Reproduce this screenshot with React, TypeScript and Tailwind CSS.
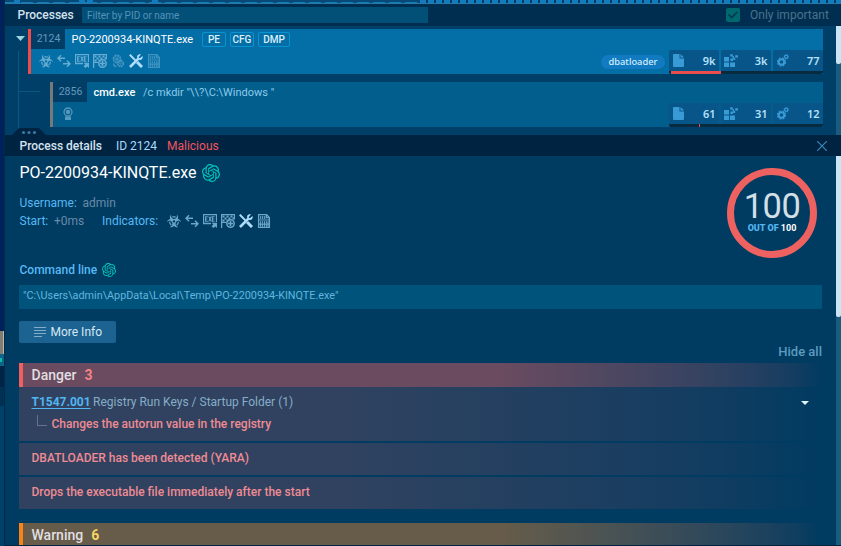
import React from "react";
import { FaBiohazard } from "react-icons/fa";
import { SiOpenai } from "react-icons/si";

type IconProps = { className?: string };

const Arrows = ({ className = "" }: IconProps) => (
  <svg viewBox="0 0 14 14" className={className} fill="none" stroke="currentColor" strokeWidth="1.5">
    <path d="M4 1.2 1 4.2l3 3M1 4.2h7M10 6.8l3 3-3 3M13 9.8H6" />
  </svg>
);

const ExeDrop = ({ className = "" }: IconProps) => (
  <svg viewBox="0 0 14 14" className={className} fill="none" stroke="currentColor">
    <path d="M8 9.5H.5v-9h13v7.5" strokeWidth="1.3" />
    <path d="M4.8 2.8H2.6v4.4h2.2M2.6 5h1.8M5.7 2.5l2.6 5M8.3 2.5l-2.6 5M11.6 2.8H9.4v4.4h2.2M9.4 5h1.8" strokeWidth="1.1" />
    <path d="M8.5 8.8H14v5.2l-1.6-1.4-2 1.4-1.9-1.7 1.8-1.9z" fill="currentColor" stroke="none" />
  </svg>
);

const FlagPlus = ({ className = "" }: IconProps) => (
  <svg viewBox="0 0 14 14" className={className} fill="none" stroke="currentColor">
    <path d="M.6 14V.6h12.8v4.6M.6 8.4H5" strokeWidth="1.3" />
    <path d="M1.5 2.5h12M3.5 4.5h10M1.5 6.5h6" strokeDasharray="2 2" strokeWidth="2" />
    <circle cx="9.5" cy="9.5" r="3.7" strokeWidth="1.5" />
    <path d="M9.5 7v5M7 9.5h5" strokeWidth="1.6" />
  </svg>
);

const CogPair = ({ className = "" }: IconProps) => (
  <svg viewBox="0 0 14 14" className={className} fill="none" stroke="currentColor">
    <circle cx="6" cy="5" r="3.5" strokeWidth="1.8" strokeDasharray="2.2 .5" />
    <circle cx="6" cy="5" r="1.2" strokeWidth="1.2" />
    <circle cx="9.5" cy="9.6" r="2.8" strokeWidth="1.7" strokeDasharray="1.8 .4" />
    <circle cx="9.5" cy="9.6" r=".8" />
    <path d="M2.5 9.5c0 2 1 3 3 3.2" strokeWidth="1.3" />
  </svg>
);

const Tools = ({ className = "" }: IconProps) => (
  <svg viewBox="0 0 14 14" className={className} fill="none" stroke="currentColor">
    <path d="m.8.8 5.6 5.6" strokeWidth="2" />
    <path d="m8 8 5 5" strokeWidth="3" />
    <path d="m1 13 8.4-8.4" strokeWidth="2.6" />
    <path d="M12 .6 9.9 2.7v1.4h1.4L13.4 2C14.4 4.2 12.7 6.3 10.5 5.9L8.1 3.5C7.7 1.3 9.8-.4 12 .6Z" fill="currentColor" stroke="none" />
  </svg>
);

const BinaryFile = ({ className = "" }: IconProps) => (
  <svg viewBox="0 0 14 14" className={className} fill="none" stroke="currentColor">
    <path d="M1.6.6h8l2.8 2.9v9.9H1.6zM9.4.6v3.1h3" strokeWidth="1.3" />
    <path d="M3.7 2v3M5.7 2v3M7.7 2v3M1.5 6h11M3.6 7.2v5.6M5.5 7.2v2M7.5 7.2v5.6M9.4 7.2v2M11 7.2v5.6M5.5 10.8v2M9.4 10.8v2M1.5 10.1h11" strokeWidth="1.1" />
  </svg>
);

const Ribbon = ({ className = "" }: IconProps) => (
  <svg viewBox="0 0 12 14" className={className} fill="none" stroke="currentColor">
    <circle cx="6" cy="5" r="4" strokeWidth="1.3" />
    <circle cx="6" cy="5" r="2.2" fill="currentColor" stroke="none" />
    <path d="M3 9.8 4.2 9 6 9.7 7.8 9l1.2.8V13H3z" fill="currentColor" stroke="none" />
  </svg>
);

const FileIcon = () => (
  <svg viewBox="0 0 11 13" className="h-[13px] w-[11px]" fill="currentColor">
    <path d="M1 0h5.5v4.5H11V12a1 1 0 0 1-1 1H1a1 1 0 0 1-1-1V1a1 1 0 0 1 1-1ZM7.5 0 11 3.5H7.5z" />
  </svg>
);

const ModulesIcon = () => (
  <svg viewBox="0 0 14 14" className="-ml-px size-3.5" fill="currentColor">
    <path d="M0 3h5v4.4H0zM0 8.6h5V13H0zM6 8.6h5V13H6zM6.2.2h2.6v2.3H6.2zM11.2 1.2H14v2.4h-2.8zM6.4 4.6H9V7H6.4zM9.2 3.8h2V6h-2zM8.4 2H10v1.8H8.4z" />
  </svg>
);

const GearsIcon = () => (
  <svg viewBox="0 0 12 13" className="h-[13px] w-3" fill="none" stroke="currentColor">
    <circle cx="4.5" cy="8" r="2.8" strokeWidth="2" />
    <circle cx="4.5" cy="8" r="4.1" strokeWidth="1.1" strokeDasharray="1.8 1.42" />
    <circle cx="9.2" cy="2.7" r="1.6" strokeWidth="1.3" />
    <circle cx="9.2" cy="2.7" r="2.4" strokeWidth=".6" strokeDasharray=".9 .9" />
  </svg>
);

function Indicators({ all = false }: { all?: boolean }) {
  return (
    <div className={`flex items-center gap-1 ${all ? "text-[#66acd1]" : "text-[#6ba6c7]"}`}>
      <FaBiohazard className="size-3.5" stroke="none" />
      <Arrows className="size-3.5" />
      <ExeDrop className="size-3.5" />
      <FlagPlus className="size-3.5" />
      {all && <CogPair className="size-3.5 opacity-65" />}
      <Tools className="size-3.5 text-[#b0ddfa]" />
      <BinaryFile className={all ? "size-3.5 opacity-60" : "size-3.5"} />
    </div>
  );
}

function Stats({ values, children }: { values: string[]; children: React.ReactNode }) {
  const icons = [<FileIcon />, <ModulesIcon />, <GearsIcon />];
  return (
    <div className="w-[154px]">
      <div className="flex gap-0.5">
        {values.map((value, i) => (
          <div key={i} className="flex h-[21px] w-[50px] items-center justify-between rounded-t-xs bg-[#08558a] pr-[3.5px] pl-1 text-[#389bd5]">
            {icons[i]}
            <span className="font-['Noto_Sans',sans-serif] text-[11px] font-semibold text-[#b5e1fa]">{value}</span>
          </div>
        ))}
      </div>
      <div className="flex h-[3px] rounded-b-xs bg-[#082b40]">{children}</div>
    </div>
  );
}

const Tag = ({ children, w }: { children: string; w: string }) => (
  <span className={`flex h-[15px] items-center justify-center rounded-xs border border-[#0b93cf] pt-px text-[10px] font-medium leading-none text-[#dcf0fc] ${w}`}>{children}</span>
);

function FindingHeader({ title, count, kind }: { title: string; count: number; kind: "danger" | "warning" }) {
  const danger = kind === "danger";
  return (
    <div className={`flex h-6 shrink-0 items-center border-l-4 bg-linear-to-r from-60% to-[#003b61] pl-[8.5px] text-sm font-medium text-[#e0dfe1] ${danger ? "border-[#f35f5c] from-[#6a4b60]" : "border-[#fb8316] from-[#665c49]"}`}>
      <span>{title}</span>
      <span className={`ml-2 font-bold ${danger ? "text-[#f48485]" : "text-[#f6d365]"}`}>{count}</span>
    </div>
  );
}

const Finding = ({ children }: { children: string }) => (
  <div className="mt-0.5 flex h-8 shrink-0 items-center bg-linear-to-r from-[#304260] from-40% to-[#003b61] pb-[2px] pl-[12.5px] text-[12px] font-medium text-[#ef8b93]">{children}</div>
);

export default function App() {
  return (
    <div className="flex h-[546px] w-[841px] overflow-hidden bg-[#003b61] font-[Roboto,sans-serif] text-[12px] leading-none">
      <aside className="flex w-[5px] shrink-0 flex-col border-r border-[#002a47] bg-[#00225a]">
        <div className="h-[331px]" />
        <div className="h-[23px] border-r border-[#c1b79a] bg-[#7e7d78]" />
        <div className="flex h-3 items-center bg-[#0d6589]"><i className="h-1 w-0.5 bg-[#08baaa]" /></div>
        <div className="h-[21px] bg-[#002346]" />
        <div className="h-[19px] bg-[#003054]" />
        <div className="grow bg-[#004069]" />
      </aside>

      <main className="flex w-[836px] flex-col border-b border-[#002342]">
        <div className="flex h-1 shrink-0 items-end border-b border-[#287ba9] bg-[#064a75]">
          <div className="flex h-[3px] w-[415px] items-end bg-[repeating-linear-gradient(90deg,#137bb9_0_12px,#064a75_12px_16px)] bg-size-[100%_1px] bg-bottom bg-no-repeat">
            <i className="ml-[9px] h-[3px] w-1.5 bg-[#137bc0]" />
            <i className="ml-[59px] h-[3px] w-1.5 bg-[#137bc0]" />
            <i className="ml-0.5 h-[3px] w-1.5 bg-[#137bc0]" />
            <i className="ml-[59px] h-[3px] w-1.5 bg-[#137bc0]" />
          </div>
          <div className="h-[3px] grow bg-[repeating-linear-gradient(90deg,#137bc0_0_6px,#003b61_6px_8px)]" />
        </div>

        <header className="flex h-[22px] shrink-0 items-center bg-[#002e50] pl-[12.5px]">
          <h1 className="w-[64.5px] text-[12px] font-medium text-[#d5e2ed]">Processes</h1>
          <input aria-label="Filter processes" placeholder="Filter by PID or name" className="h-4 w-[346px] bg-[#024f78] px-[5px] pt-px text-[10px] outline-none placeholder:text-[#5593b8]" />
          <label className="ml-auto flex items-center text-[12px] text-[#4c718b]">
            <svg viewBox="0 0 14 14" className="mr-2.5 size-3.5">
              <rect width="14" height="14" rx="2" fill="#00696f" />
              <path d="m2.5 6.5 3.2 3 5.8-5.7" fill="none" stroke="#003c55" strokeWidth="1.8" />
            </svg>
            <span className="w-[91px] whitespace-nowrap">Only important</span>
          </label>
        </header>

        <section className="relative flex h-[109px] shrink-0 bg-[#003f68]">
          <div className="flex w-[23px] shrink-0 flex-col items-center">
            <svg viewBox="0 0 9 5" className="mt-2.5 ml-[7px] h-[5px] w-[9px]" fill="#9cd4df"><path d="M0 0h9L4.5 5z" /></svg>
            <svg viewBox="0 0 23 84" className="mt-2.5 h-[84px] w-[23px]" fill="none" stroke="#0b587f"><path d="M13.5 0v84M13.5 40.5H23" /></svg>
          </div>
          <div className="flex w-[795px] flex-col pt-[3px]">
            <article className="flex h-[45px] justify-between border-l-[3px] border-[#ef4b48] bg-[#046ea7]">
              <div>
                <div className="flex h-5 items-center">
                  <span className="flex h-5 w-[34px] items-center justify-center bg-[#023d66] pt-px pl-[1px] text-[10.5px] text-[#6499bc]">2124</span>
                  <strong className="ml-[6.5px] w-[130.5px] text-[11px] font-normal whitespace-nowrap text-white">PO-2200934-KINQTE.exe</strong>
                  <div className="flex gap-1"><Tag w="w-6">PE</Tag><Tag w="w-6">CFG</Tag><Tag w="w-8">DMP</Tag></div>
                </div>
                <div className="mt-[5px] ml-2"><Indicators all /></div>
              </div>
              <div className="flex items-end gap-1">
                <span className="mb-[5px] flex h-3.5 w-16 items-center justify-center rounded-full bg-[#117ac0] font-['Noto_Sans',sans-serif] text-[9.3px] font-medium text-[#d2efff]">dbatloader</span>
                <Stats values={["9k", "3k", "77"]}><i className="ml-0.5 h-full w-[50px] bg-[#eb4d4c]" /></Stats>
              </div>
            </article>
            <div className="mt-2 flex">
              <i className="mt-[9px] h-px w-3 bg-[#0b587f]" />
              <article className="ml-2.5 flex h-[45px] grow items-end justify-between border-l-[3px] border-[#777877] bg-[#025e8c]">
                <div className="h-[45px]">
                  <div className="flex h-5 items-center">
                    <span className="flex h-5 w-[34px] items-center justify-center bg-[#023d66] pt-px pl-[1px] text-[10.5px] text-[#6499bc]">2856</span>
                    <strong className="ml-[6.5px] w-[49.5px] text-[11px] font-medium text-white">cmd.exe</strong>
                    <span className="text-[11px] whitespace-pre text-[#8bcbec]">{'/c mkdir "\\\\?\\C:\\Windows "'}</span>
                  </div>
                  <Ribbon className="mt-[5px] ml-[9px] h-3.5 w-3 text-[#5597bd]" />
                </div>
                <Stats values={["61", "31", "12"]}><i className="ml-[30px] h-full w-px bg-[#eb4d4c]" /></Stats>
              </article>
            </div>
          </div>
          <div className="ml-auto w-[5px] bg-[#195c7d]"><div className="h-[38px] rounded-b-xs bg-[#c9e6f7]" /></div>
          <svg viewBox="0 0 34 7" className="absolute bottom-0 left-[7px] h-[7px] w-[34px]"><path d="M0 7 7 0h20l7 7z" fill="#002342" /><g fill="#3779a1"><circle cx="11.5" cy="4.5" r="1.6" /><circle cx="17" cy="4.5" r="1.6" /><circle cx="22.5" cy="4.5" r="1.6" /></g></svg>
        </section>

        <header className="flex h-[21px] shrink-0 items-center bg-[#002342] pl-[14.5px] text-[12px]">
          <h2 className="w-[96.5px] font-medium text-[#d5e2ed]">Process details</h2>
          <span className="w-[51px] whitespace-nowrap text-[#a9dafa]">ID 2124</span>
          <span className="text-[#f2555d]">Malicious</span>
          <svg viewBox="0 0 10 10" className="mr-3.5 ml-auto size-2.5" stroke="#3986b6" strokeWidth="1.2"><path d="m0 0 10 10M10 0 0 10" /></svg>
        </header>

        <section className="flex min-h-0 grow">
          <div className="ml-3.5 flex w-[803px] flex-col overflow-hidden pt-[7px]">
            <div className="flex h-[106px] shrink-0 justify-between">
              <div className="pl-[0.5px]">
                <h3 className="flex h-5 items-center gap-1.5 text-[16px] text-white">PO-2200934-KINQTE.exe<SiOpenai className="size-[18px] text-[#03c7ba]" /></h3>
                <div className="mt-[11px] flex h-[18px] items-center text-[#56b9f4]"><span className="w-[63px]">Username:</span><span className="text-[#668ba8]">admin</span></div>
                <div className="flex h-[18px] items-center text-[#56b9f4]">
                  <span className="w-[34.5px]">Start:</span><span className="w-12 text-[#668ba8]">+0ms</span><span className="w-[65px]">Indicators:</span><Indicators />
                </div>
              </div>
              <div className="mt-[5px] mr-[5px] flex size-[90px] flex-col items-center rounded-full border-[7px] border-[#ed6260]">
                <span className="mt-[14px] h-[34px] text-[34.5px] leading-[34px] font-normal tracking-[-0.5px] text-[#d3dfe7]">100</span>
                <span className="mt-[1px] text-[9px] leading-[9px] font-bold text-white"><b className="text-[#50b5f0]">OUT OF</b> 100</span>
              </div>
            </div>
            <h4 className="-mt-[7px] flex h-4 shrink-0 items-center gap-[5px] pl-[0.5px] font-medium text-[#56b9f4]">Command line<SiOpenai className="size-3.5 text-[#03c7ba]" /></h4>
            <div className="mt-[7px] h-6 shrink-0 bg-[#00537b] pt-[6px] pl-1 text-[10.82px] text-[#63b5df]">"C:\Users\admin\AppData\Local\Temp\PO-2200934-KINQTE.exe"</div>
            <button className="mt-3 flex h-[22px] w-[97px] shrink-0 items-center rounded-xs bg-[#1d6391] pl-[15px] text-[12px] text-[#d4e7f5]">
              <svg viewBox="0 0 12 11" className="mr-[4.5px] h-[11px] w-3" stroke="#82acc8"><path d="M0 .5h12M0 3.5h12M0 6.5h12M0 9.5h8" /></svg>More Info
            </button>
            <button className="mt-[3px] mb-1 h-3 shrink-0 self-end text-[13px] leading-3 font-medium text-[#5b9cc0]">Hide all</button>
            <div className="mt-px shrink-0"><FindingHeader title="Danger" count={3} kind="danger" /></div>
            <div className="flex h-[54px] shrink-0 justify-between bg-linear-to-r from-[#304260] from-40% to-[#003b61] pl-[12.5px]">
              <div>
                <div className="flex h-[29px] items-center text-[#86adc7]"><a className="mr-[2.5px] font-bold text-[#50b5f0] underline underline-offset-2">T1547.001</a>Registry Run Keys / Startup Folder (1)</div>
                <div className="flex h-4 items-center font-medium text-[#ef8b93]"><i className="mr-[5px] mb-2 ml-[5px] h-[11px] w-2.5 border-b border-l border-[#64738b]" />Changes the autorun value in the registry</div>
              </div>
              <svg viewBox="0 0 8 4" className="mt-3.5 mr-[13px] h-1 w-2" fill="#e0f4ff"><path d="M0 0h8L4 4z" /></svg>
            </div>
            <Finding>DBATLOADER has been detected (YARA)</Finding>
            <Finding>Drops the executable file immediately after the start</Finding>
            <div className="mt-3.5 shrink-0"><FindingHeader title="Warning" count={6} kind="warning" /></div>
          </div>
          <div className="ml-auto w-[5px] bg-[#195c7d]"><div className="h-[161px] rounded-b-xs bg-[#c9e6f7]" /></div>
        </section>
      </main>
    </div>
  );
}
